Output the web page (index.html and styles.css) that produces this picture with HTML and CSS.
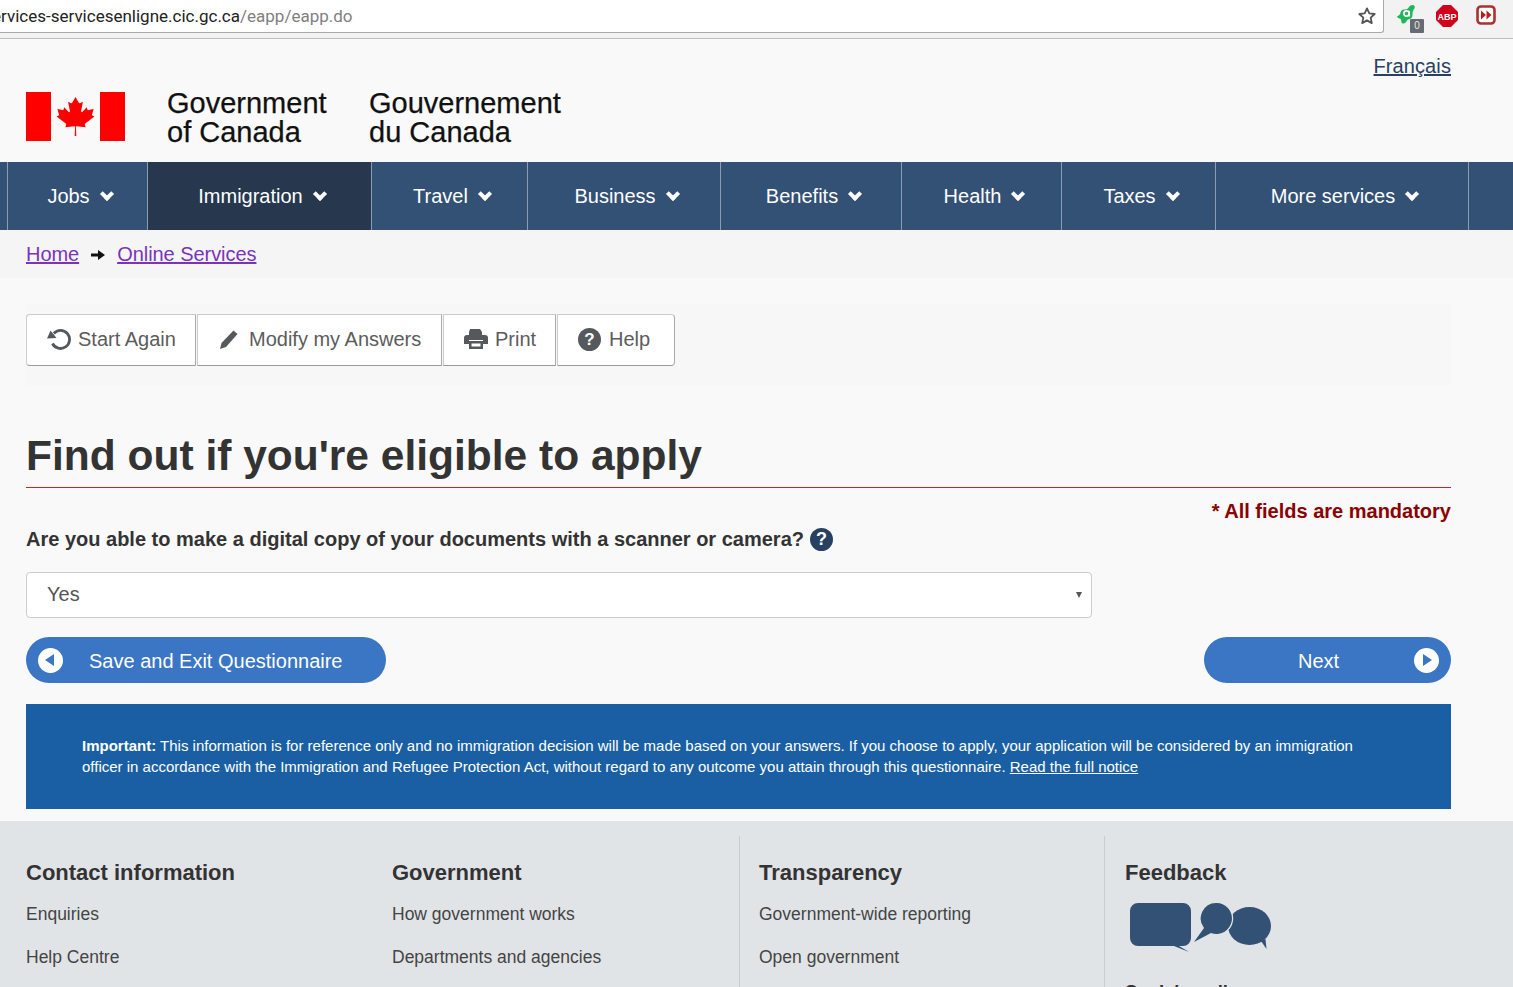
FILE: index.html
```html
<!DOCTYPE html>
<html lang="en">
<head>
<meta charset="utf-8">
<title>Find out if you're eligible to apply</title>
<link rel="stylesheet" href="styles.css">
</head>
<body>
<div class="chrome">
  <div class="omnibox">
    <span class="url">ervices-servicesenligne.cic.gc.ca<span class="url-path">/eapp/eapp.do</span></span>
    <svg class="star" viewBox="0 0 20 20" width="20" height="20"><path d="M10 2.400l2.300 5 5.400.6-4 3.700 1.100 5.400L10 14.400l-4.800 2.700 1.100-5.400-4-3.700 5.400-.6z" fill="none" stroke="#555" stroke-width="1.800" stroke-linejoin="round"/></svg>
  </div>
  <div class="exts">
    <div class="ext ext-green">
      <svg viewBox="0 0 20 19" width="20" height="19"><path d="M0 11.500c2-1 3-1.500 3.500-4C4 5 6 4.500 8 4.500c2.500 0 3-1 4-2.500 1-1.500 3.500-2.500 5-1.500 1.500 1.200.5 3-.5 4.500-1 1.500-1 3-1 5s-1 3.500-3 4c-2 .4-2.500 1.500-3.500 3-1 1.500-3 2-4 1-1.200-1-.5-2.500-1-3.500-.7-1.300-2.500-1-3.500-2-.7-.7-.7-1.300-.5-2z" fill="#1fb759"/><circle cx="9.500" cy="8.500" r="2.600" fill="none" stroke="#fff" stroke-width="1.600"/><path d="M12.300 6v5.500" stroke="#fff" stroke-width="1.600"/></svg>
      <span class="ext-badge">0</span>
    </div>
    <svg class="ext" viewBox="0 0 22 22" width="22" height="22"><path d="M7 0h8l7 7v8l-7 7H7l-7-7V7z" fill="#d0021b"/><text x="11" y="14.500" class="abp">ABP</text></svg>
    <svg class="ext ext-last" viewBox="0 0 20 20" width="20" height="20"><rect x="1.500" y="1.500" width="17" height="17" rx="3.500" fill="#fff" stroke="#a83232" stroke-width="2.600"/><path d="M5 5.500l5 4.500-5 4.500zM10.500 5.500l5 4.500-5 4.500z" fill="#b22222"/></svg>
  </div>
</div>

<header class="site-head">
  <div class="brand">
    <svg class="flag" viewBox="0 0 99 49" width="99" height="49">
      <rect width="25" height="49" fill="#f00"/><rect x="74" width="25" height="49" fill="#f00"/>
      <path transform="translate(49.500 5) scale(.93 .88) translate(-49.500 -5)" d="M49.500 5l-3.600 6.500c-.4.700-1.100.6-1.800.2l-2.600-1.300 1.900 10.300c.4 1.900-.9 1.900-1.500 1.100l-4.500-5.100-.7 2.600c-.1.300-.5.700-1 .6l-5.700-1.200 1.500 5.400c.3 1.200.6 1.700-.3 2l-2 1 9.800 8c.4.300.6.800.4 1.400l-.9 2.800 9.800-1.100c.3 0 .8.300.8.600l-.5 10.600h1.800l-.5-10.600c0-.3.500-.6.800-.6l9.800 1.100-.9-2.800c-.2-.6 0-1.100.4-1.400l9.800-8-2-1c-.9-.3-.6-.8-.3-2l1.500-5.400-5.700 1.200c-.5.100-.9-.3-1-.6l-.7-2.600-4.500 5.100c-.6.800-1.900.8-1.500-1.100l1.900-10.300-2.600 1.300c-.7.400-1.400.5-1.800-.2z" fill="#f00"/>
    </svg>
    <div class="wordmark">Government<br>of Canada</div>
    <div class="wordmark">Gouvernement<br>du Canada</div>
  </div>
  <a class="lang" href="#">Français</a>
</header>

<nav class="mainnav">
  <a class="nav-item w-jobs" href="#">Jobs<i class="chev"></i></a>
  <a class="nav-item w-imm active" href="#">Immigration<i class="chev"></i></a>
  <a class="nav-item w-travel" href="#">Travel<i class="chev"></i></a>
  <a class="nav-item w-bus" href="#">Business<i class="chev"></i></a>
  <a class="nav-item w-ben" href="#">Benefits<i class="chev"></i></a>
  <a class="nav-item w-health" href="#">Health<i class="chev"></i></a>
  <a class="nav-item w-tax" href="#">Taxes<i class="chev"></i></a>
  <a class="nav-item w-more" href="#">More services<i class="chev"></i></a>
</nav>

<div class="crumbs">
  <a href="#">Home</a>
  <svg class="crumb-arrow" viewBox="0 0 14 10" width="14" height="10"><path d="M0 3.500h7V0l7 5-7 5V6.500H0z" fill="#111"/></svg>
  <a href="#">Online Services</a>
</div>

<main class="content">
  <div class="toolbar">
    <div class="btn-group">
      <a class="tool" href="#">
        <svg viewBox="0 0 24 24" width="24" height="24"><path d="M6.800 6.500A9 9 0 1 1 5.500 16.500" fill="none" stroke="#55595c" stroke-width="2.800"/><path d="M0 11.500l9.500-.5L3.500 3.500z" fill="#55595c"/></svg>
        Start Again</a>
      <a class="tool" href="#">
        <svg viewBox="0 0 22 22" width="22" height="22"><path d="M15.500 2.500l4 3.500L8 19l-6 2 1.500-6z" fill="#55595c"/></svg>
        Modify my Answers</a>
      <a class="tool" href="#">
        <svg viewBox="0 0 26 22" width="26" height="22"><path d="M7 1h10l2 3v3H6V4zM1 10a3 3 0 0 1 3-3h18a3 3 0 0 1 3 3v6h-5v-4H6v4H1z" fill="#55595c"/><path d="M6 13h14v8H6zM8.500 15.500v3h9v-3z" fill="#55595c" fill-rule="evenodd"/></svg>
        Print</a>
      <a class="tool" href="#"><span class="help-ico">?</span>Help</a>
    </div>
  </div>

  <h1 class="title">Find out if you're eligible to apply</h1>
  <p class="mandatory">* All fields are mandatory</p>
  <label class="question">Are you able to make a digital copy of your documents with a scanner or camera? <span class="q-help">?</span></label>
  <div class="select">Yes<span class="caret"></span></div>

  <div class="actions">
    <a class="pill pill-back" href="#"><span class="disc"><i class="tri-left"></i></span>Save and Exit Questionnaire</a>
    <a class="pill pill-next" href="#">Next<span class="disc"><i class="tri-right"></i></span></a>
  </div>

  <section class="notice">
    <p><strong>Important:</strong> This information is for reference only and no immigration decision will be made based on your answers. If you choose to apply, your application will be considered by an immigration officer in accordance with the Immigration and Refugee Protection Act, without regard to any outcome you attain through this questionnaire. <a href="#">Read the full notice</a></p>
  </section>
</main>

<footer class="foot">
  <div class="col col-1">
    <h2>Contact information</h2>
    <a href="#">Enquiries</a>
    <a href="#">Help Centre</a>
  </div>
  <div class="col col-2">
    <h2>Government</h2>
    <a href="#">How government works</a>
    <a href="#">Departments and agencies</a>
  </div>
  <div class="col col-3">
    <h2>Transparency</h2>
    <a href="#">Government-wide reporting</a>
    <a href="#">Open government</a>
  </div>
  <div class="col col-4">
    <h2>Feedback</h2>
    <svg class="bubbles" viewBox="0 0 146 50" width="146" height="50">
      <path d="M11 0h45a8 8 0 0 1 8 8v27a8 8 0 0 1-8 8h-4l10 6-15-6H11a8 8 0 0 1-8-8V8a8 8 0 0 1 8-8z" fill="#335075"/>
      <ellipse cx="122.500" cy="23" rx="21.500" ry="19" fill="#335075"/>
      <path d="M134 38l5.500 8-1-10z" fill="#335075"/>
      <path d="M89 0a15.500 15.500 0 1 1-5 30l-17 9 10-14A15.500 15.500 0 0 1 89 0z" fill="#335075" stroke="#e1e4e7" stroke-width="2.500" paint-order="stroke"/>
    </svg>
    <a href="#">Social media</a>
  </div>
</footer>
</body>
</html>
```

FILE: styles.css
```css
* { box-sizing: border-box; }
html, body { margin: 0; padding: 0; height: 987px; overflow: hidden; }
body { background: #f9f9f9; font-family: "Liberation Sans", Arial, sans-serif; color: #333; }

.chrome { height: 39px; background: #f2f2f2; border-bottom: 1px solid #bdbdbd; display: flex; }
.omnibox { width: 1384px; height: 33px; background: #fff; border: 1px solid #aaa; border-width: 0 1px 1px 0; border-radius: 0 0 3px 0; display: flex; align-items: center; justify-content: space-between; padding-right: 6px; overflow: hidden; }
.url { font-family: "Roboto", sans-serif; font-size: 17px; color: #222; margin-left: -8px; }
.url-path { color: #808080; }
.star { display: block; }
.exts { display: flex; align-items: flex-start; padding: 5px 0 0 13px; gap: 20px; }
.ext { display: block; position: relative; }
.ext-last { margin-left: -2px; }
.ext-green { width: 19px; height: 19px; }
.ext-green svg { display: block; }
.ext-badge { position: absolute; left: 13px; top: 14px; width: 14px; height: 14px; background: #666a72; color: #e8e8e8; font: 10px/14px "Liberation Sans", sans-serif; text-align: center; border-radius: 1px; }
.abp { font: bold 9px "Liberation Sans", sans-serif; fill: #fff; text-anchor: middle; }

.site-head { height: 123px; display: flex; justify-content: space-between; padding: 0 62px 0 26px; }
.brand { display: flex; align-items: flex-start; padding-top: 50px; }
.flag { display: block; margin: 3px 42px 0 0; }
.wordmark { font-size: 29px; line-height: 29px; color: #111; width: 202px; -webkit-text-stroke: .25px #111; }
.lang { font-size: 20px; letter-spacing: .1px; line-height: 24px; color: #284162; margin-top: 15px; }

.mainnav { height: 68px; background: #335075; display: flex; padding-left: 7px; }
.nav-item { display: flex; align-items: center; justify-content: center; height: 68px; color: #fff; font-size: 20px; text-decoration: none; border-left: 1px solid #8a9db3; padding-left: 6px; }
.nav-item.active { background: #26374e; }
.w-jobs { width: 140px; }
.w-imm { width: 224px; }
.w-travel { width: 156px; }
.w-bus { width: 193px; }
.w-ben { width: 181px; }
.w-health { width: 160px; }
.w-tax { width: 154px; }
.w-more { border-right: 1px solid #8a9db3; width: 254px; }
.chev { display: inline-block; width: 10px; height: 10px; border: solid #fff; border-width: 0 4px 4px 0; transform: rotate(45deg); margin: -4px 2px 0 12px; }

.crumbs { height: 48px; background: #f5f5f5; display: flex; align-items: center; gap: 12px; padding-left: 26px; font-size: 20px; }
.crumbs a { color: #7834bc; letter-spacing: -.05px; }
.crumb-arrow { display: block; margin-top: 1px; }

.content { padding: 26px 62px 0 26px; }
.toolbar { height: 81px; background: #f7f7f7; padding-top: 10px; }
.btn-group { display: flex; gap: 1px; }
.tool { height: 52px; display: flex; align-items: center; gap: 7px; padding: 0 0 2px 20px; background: #fff; border: 1px solid #ccc; border-bottom-color: #999; border-right-color: #aaa; color: #5c5c5c; font-size: 20px; text-decoration: none; }
.tool:first-child { border-radius: 4px 0 0 4px; width: 170px; }
.tool:nth-child(2) { width: 245px; gap: 9px; }
.tool:nth-child(3) { width: 113px; padding-left: 19px; gap: 6px; }
.tool:last-child { border-radius: 0 4px 4px 0; width: 118px; gap: 8px; }
.help-ico { width: 23px; height: 23px; border-radius: 50%; background: #55595c; color: #fff; font-weight: bold; font-size: 17px; line-height: 23px; text-align: center; }

.title { margin: 41px 0 0; font-size: 42.500px; line-height: 59px; font-weight: bold; color: #333; border-bottom: 1px solid #c1272d; height: 62px; }
.mandatory { margin: 12px 0 0; text-align: right; font-size: 20px; line-height: 23px; font-weight: bold; color: #8b0000; }
.question { display: flex; align-items: center; gap: 6px; margin-top: 3px; font-size: 20px; line-height: 27px; font-weight: bold; color: #333; }
.q-help { width: 23px; height: 23px; border-radius: 50%; background: #284162; color: #fff; font-size: 18px; line-height: 23px; text-align: center; }
.select { position: relative; width: 1066px; height: 46px; margin-top: 19px; background: #fff; border: 1px solid #ccc; border-radius: 4px; padding-left: 20px; font-size: 20px; line-height: 43px; color: #555; }
.caret { position: absolute; right: 9px; top: 19px; border: solid transparent; border-width: 6px 3.500px 0; border-top-color: #555; }

.actions { display: flex; justify-content: space-between; margin-top: 19px; }
.pill { height: 46px; border-radius: 23px; background: #3a76c3; color: #fff; font-size: 20px; display: flex; align-items: center; text-decoration: none; padding-top: 2px; }
.pill-back { width: 360px; padding-left: 12px; gap: 26px; }
.pill-next { width: 247px; padding-left: 94px; justify-content: space-between; padding-right: 12px; }
.disc { width: 25px; height: 25px; border-radius: 50%; background: #fff; display: flex; align-items: center; justify-content: center; margin-top: -2px; }
.tri-left { border: solid transparent; border-width: 6px 9px 6px 0; border-right-color: #3a76c3; margin-left: -2px; }
.tri-right { border: solid transparent; border-width: 6px 0 6px 9px; border-left-color: #3a76c3; margin-left: 2px; }

.notice { height: 105px; margin-top: 21px; background: #1a5fa3; color: #fff; padding: 31px 60px 0 56px; font-size: 15px; line-height: 21px; }
.notice p { margin: 0; }
.notice a { color: #fff; }

.foot { margin-top: 12px; height: 166px; background: #e1e4e7; display: flex; padding: 15px 0 0 26px; }
.col { height: 151px; }
.col h2 { margin: 0 0 18px; font-size: 22px; line-height: 25px; font-weight: bold; color: #333; padding-top: 24px; }
.col a { display: block; color: #444; font-size: 17.500px; line-height: 22px; text-decoration: none; margin-bottom: 21px; }
.col-1 { width: 366px; }
.col-2 { width: 347px; }
.col-3 { padding-left: 19px; border-left: 1px solid #c9cdd1; width: 365px; }
.col-4 { padding-left: 20px; border-left: 1px solid #c9cdd1; flex: 1; }
.bubbles { display: block; margin: 2px 0 0 2px; }
.col-4 a { color: #333; font-weight: bold; font-size: 18.500px; margin-top: 28px; }
```
